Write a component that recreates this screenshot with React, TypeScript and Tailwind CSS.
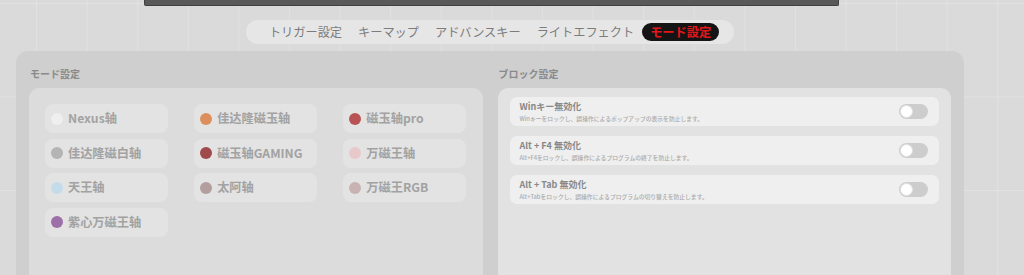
import React from "react";

const tabs = ["トリガー設定", "キーマップ", "アドバンスキー", "ライトエフェクト", "モード設定"];

const switches = [
  { name: "Nexus轴", dot: "bg-[#efefef]" },
  { name: "佳达隆磁玉轴", dot: "bg-[#dc8f5c]" },
  { name: "磁玉轴pro", dot: "bg-[#b95353]" },
  { name: "佳达隆磁白轴", dot: "bg-[#b4b4b4]" },
  { name: "磁玉轴GAMING", dot: "bg-[#9f4b4b]" },
  { name: "万磁王轴", dot: "bg-[#e9c8cb]" },
  { name: "天王轴", dot: "bg-[#c4dcea]" },
  { name: "太阿轴", dot: "bg-[#b39d9d]" },
  { name: "万磁王RGB", dot: "bg-[#c9b2b2]" },
  { name: "紫心万磁王轴", dot: "bg-[#9d70a9]" },
];

const blocks = [
  { title: "Winキー無効化", desc: "Winキーをロックし、誤操作によるポップアップの表示を防止します。" },
  { title: "Alt + F4 無効化", desc: "Alt+F4をロックし、誤操作によるプログラムの終了を防止します。" },
  { title: "Alt + Tab 無効化", desc: "Alt+Tabをロックし、誤操作によるプログラムの切り替えを防止します。" },
];

const jp = "font-['Noto_Sans_CJK_JP',sans-serif]";
const sc = "font-['Noto_Sans_CJK_SC',sans-serif]";

function Toggle() {
  return (
    <div className="flex h-[15px] w-[29px] shrink-0 items-center rounded-full bg-[#cdcdcd] px-[1px]">
      <div className="h-[13px] w-[13px] rounded-full border border-[#e2e2e2] bg-white" />
    </div>
  );
}

export default function App() {
  return (
    <div className="h-[275px] w-[1024px] overflow-hidden bg-[#dadada] bg-[linear-gradient(to_right,rgba(255,255,255,0.18)_1px,transparent_1px),linear-gradient(to_bottom,rgba(255,255,255,0.18)_1px,transparent_1px)] bg-size-[50.6px_93.5px] bg-position-[36px_3px]">
      <div className="flex w-[980px] flex-col px-4">
        <div className="ml-[128px] h-[6px] w-[695px] rounded-b-[2px] border-x border-b border-[#404040] bg-[#595959]" />
        <div className={`mx-auto mt-[14px] flex items-center rounded-full bg-[#e6e6e6] px-[15px] py-[3px] ${jp}`}>
          {tabs.map((t, i) =>
            i === tabs.length - 1 ? (
              <div
                key={t}
                className="h-[18px] rounded-full bg-[#141414] px-[8px] text-[12.2px] font-bold leading-[18px] text-[#e3161c]"
              >
                {t}
              </div>
            ) : (
              <div key={t} className="h-[18px] px-[8px] text-[12.2px] leading-[18px] text-[#7c7c7c]">
                {t}
              </div>
            )
          )}
        </div>
        <div className="mt-[7px] h-[260px] rounded-[12px] bg-[#cfcfcf] px-[13px] pt-[16px]">
          <div className="grid grid-cols-2 gap-x-[15px]">
            <div className="flex flex-col">
              <div className={`mb-[7px] h-[14px] pl-[1px] text-[10px] font-bold leading-[14px] text-[#8a8a8a] ${jp}`}>
                モード設定
              </div>
              <div className="h-[220px] rounded-[10px] bg-[#dcdcdc] px-[16px] pt-[16px]">
                <div className="grid grid-cols-3 gap-x-[26px] gap-y-[5.5px]">
                  {switches.map((s) => (
                    <div
                      key={s.name}
                      className={`flex h-[29px] items-center gap-[5px] rounded-[8px] bg-[#e3e3e3] pl-[6px] ${sc}`}
                    >
                      <div className={`h-[12px] w-[12px] shrink-0 rounded-full ${s.dot}`} />
                      <span className="text-[12.2px] font-bold leading-none text-[#a2a2a2]">{s.name}</span>
                    </div>
                  ))}
                </div>
              </div>
            </div>
            <div className="flex flex-col">
              <div className={`mb-[7px] h-[14px] pl-[1px] text-[10px] font-bold leading-[14px] text-[#8a8a8a] ${jp}`}>
                ブロック設定
              </div>
              <div className="flex h-[220px] flex-col gap-[10px] rounded-[10px] bg-[#e2e2e2] px-[12px] pt-[9px]">
                {blocks.map((b) => (
                  <div
                    key={b.title}
                    className={`flex h-[29px] items-center justify-between rounded-[7px] bg-[#efefef] pl-[10px] pr-[11px] ${jp}`}
                  >
                    <div className="flex flex-col">
                      <div className="text-[9px] font-bold leading-[12px] text-[#888888]">{b.title}</div>
                      <div className="mt-[2px] text-[5.8px] font-medium leading-[8px] text-[#ababab]">{b.desc}</div>
                    </div>
                    <Toggle />
                  </div>
                ))}
              </div>
            </div>
          </div>
        </div>
      </div>
    </div>
  );
}
